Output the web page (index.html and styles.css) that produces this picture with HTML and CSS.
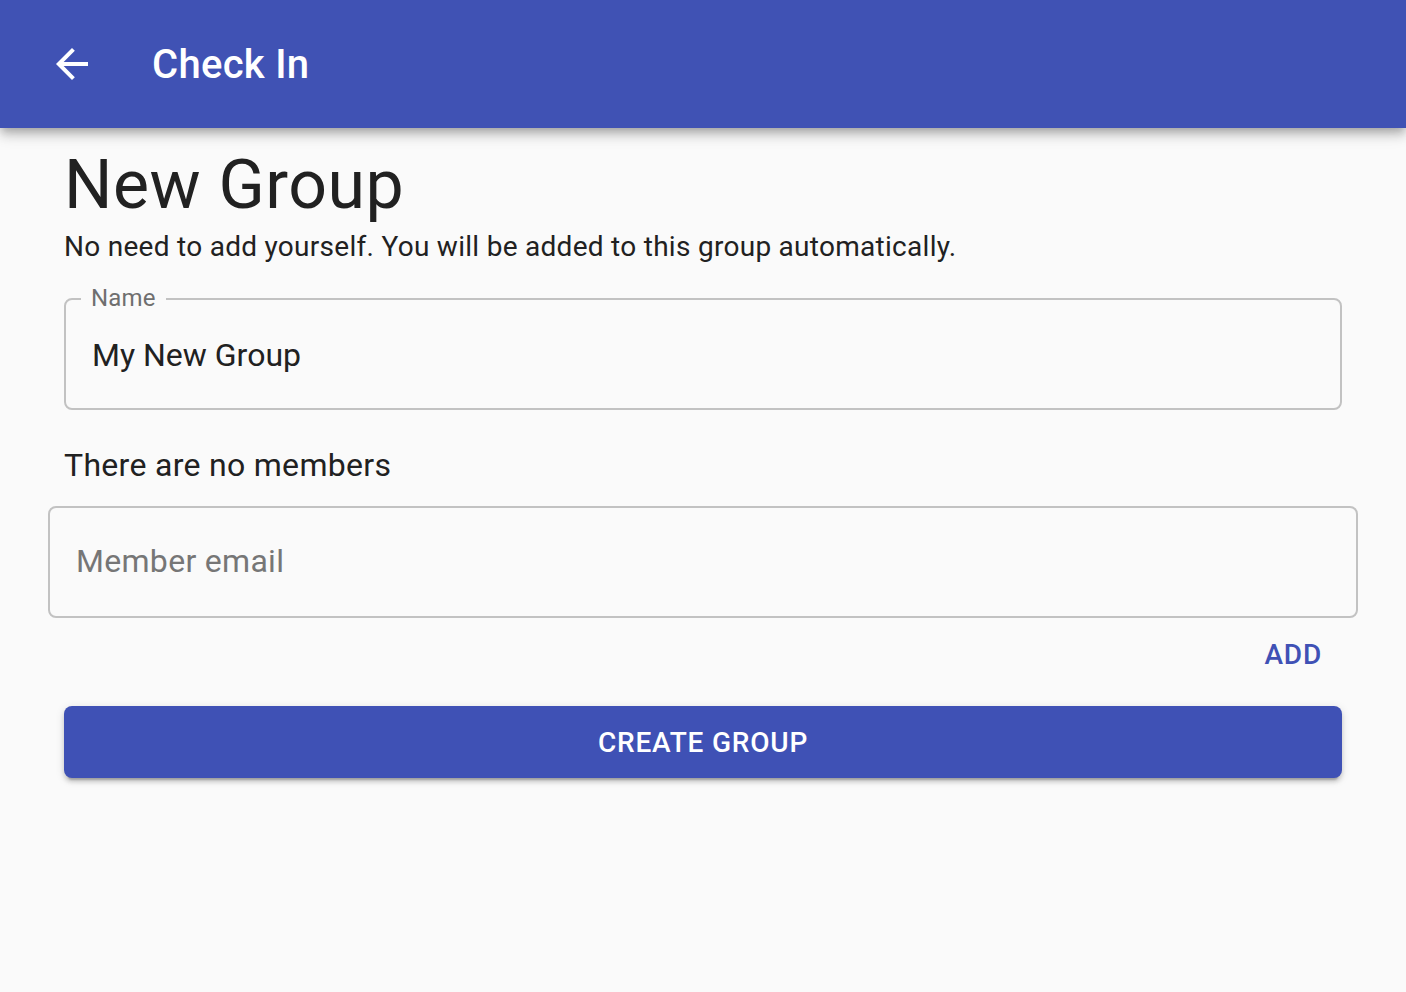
FILE: index.html
```html
<!DOCTYPE html>
<html lang="en">
<head>
<meta charset="utf-8">
<title>Check In</title>
<link rel="stylesheet" href="styles.css">
</head>
<body>
<header class="appbar">
  <button class="back-btn" aria-label="Back">
    <svg class="back-icon" viewBox="0 0 24 24" width="48" height="48"><path d="M20 11H7.83l5.59-5.59L12 4l-8 8 8 8 1.41-1.41L7.83 13H20v-2z" fill="#ffffff"/></svg>
  </button>
  <h1 class="appbar-title">Check In</h1>
</header>
<main class="content">
  <h2 class="page-title">New Group</h2>
  <p class="hint">No need to add yourself. You will be added to this group automatically.</p>
  <div class="field">
    <label class="field-label" for="name">Name</label>
    <input class="field-input" id="name" type="text" value="My New Group">
  </div>
  <p class="members">There are no members</p>
  <div class="field field--wide">
    <input class="field-input field-input--placeholder" type="email" placeholder="Member email">
  </div>
  <div class="add-row">
    <button class="text-btn">ADD</button>
  </div>
  <button class="primary-btn">CREATE GROUP</button>
</main>
</body>
</html>
```

FILE: styles.css
```css
* {
  box-sizing: border-box;
}

html, body {
  margin: 0;
  padding: 0;
}

body {
  background: #fafafa;
  font-family: Roboto, "Liberation Sans", sans-serif;
  color: #212121;
  min-height: 992px;
}

.appbar {
  height: 128px;
  background: #4052b4;
  display: flex;
  align-items: center;
  padding-left: 48px;
  box-shadow: 0 4px 8px -2px rgba(0,0,0,0.2), 0 8px 10px 0 rgba(0,0,0,0.14), 0 2px 20px 0 rgba(0,0,0,0.12);
  position: relative;
  z-index: 1;
}

.back-btn {
  width: 48px;
  height: 48px;
  padding: 0;
  border: 0;
  background: transparent;
  display: flex;
}

.back-icon {
  display: block;
}

.appbar-title {
  margin: 0 0 0 56px;
  padding-top: 1px;
  font-size: 40px;
  line-height: 48px;
  font-weight: 500;
  color: #ffffff;
  letter-spacing: 0.3px;
}

.content {
  padding: 16px 64px 0;
  display: flex;
  flex-direction: column;
}

.page-title {
  margin: 0;
  font-size: 68px;
  line-height: 82px;
  font-weight: 400;
  letter-spacing: 0.5px;
  color: #212121;
}

.hint {
  margin: 0;
  padding-top: 1px;
  font-size: 28px;
  line-height: 40px;
  letter-spacing: 0.28px;
  color: #212121;
}

.field {
  position: relative;
  height: 112px;
  margin-top: 31px;
  border: 2px solid #c2c2c2;
  border-radius: 8px;
}

.field--wide {
  margin: 17px -16px 0;
}

.field-label {
  position: absolute;
  left: 15px;
  top: -14px;
  padding: 0 10px;
  background: #fafafa;
  font-size: 24px;
  line-height: 24px;
  color: #6f6f6f;
  letter-spacing: 0.2px;
}

.field-input {
  display: block;
  width: 100%;
  height: 108px;
  padding: 1px 26px 0;
  border: 0;
  outline: none;
  background: transparent;
  font-family: Roboto, "Liberation Sans", sans-serif;
  font-size: 32px;
  color: #212121;
  letter-spacing: 0;
}

.field-input--placeholder {
  padding: 0 26px 3px;
  letter-spacing: 0.3px;
}

.field-input::placeholder {
  color: #767676;
  opacity: 1;
}

.members {
  margin: 31px 0 0;
  font-size: 32px;
  line-height: 48px;
  letter-spacing: 0.3px;
  color: #212121;
}

.add-row {
  display: flex;
  justify-content: flex-end;
  margin-top: 17px;
}

.text-btn {
  height: 40px;
  padding: 0 16px;
  margin-right: 4px;
  border: 0;
  background: transparent;
  font-family: Roboto, "Liberation Sans", sans-serif;
  font-size: 28px;
  line-height: 40px;
  font-weight: 500;
  letter-spacing: 0.8px;
  color: #3f51b5;
}

.primary-btn {
  margin-top: 31px;
  height: 72px;
  width: 100%;
  border: 0;
  border-radius: 8px;
  background: #3f51b5;
  color: #ffffff;
  font-family: Roboto, "Liberation Sans", sans-serif;
  font-size: 28px;
  font-weight: 500;
  letter-spacing: 0.8px;
  line-height: 70px;
  padding: 2px 0 0;
  box-shadow: 0 6px 2px -4px rgba(0,0,0,0.2), 0 4px 4px 0 rgba(0,0,0,0.14), 0 2px 10px 0 rgba(0,0,0,0.12);
}
```
